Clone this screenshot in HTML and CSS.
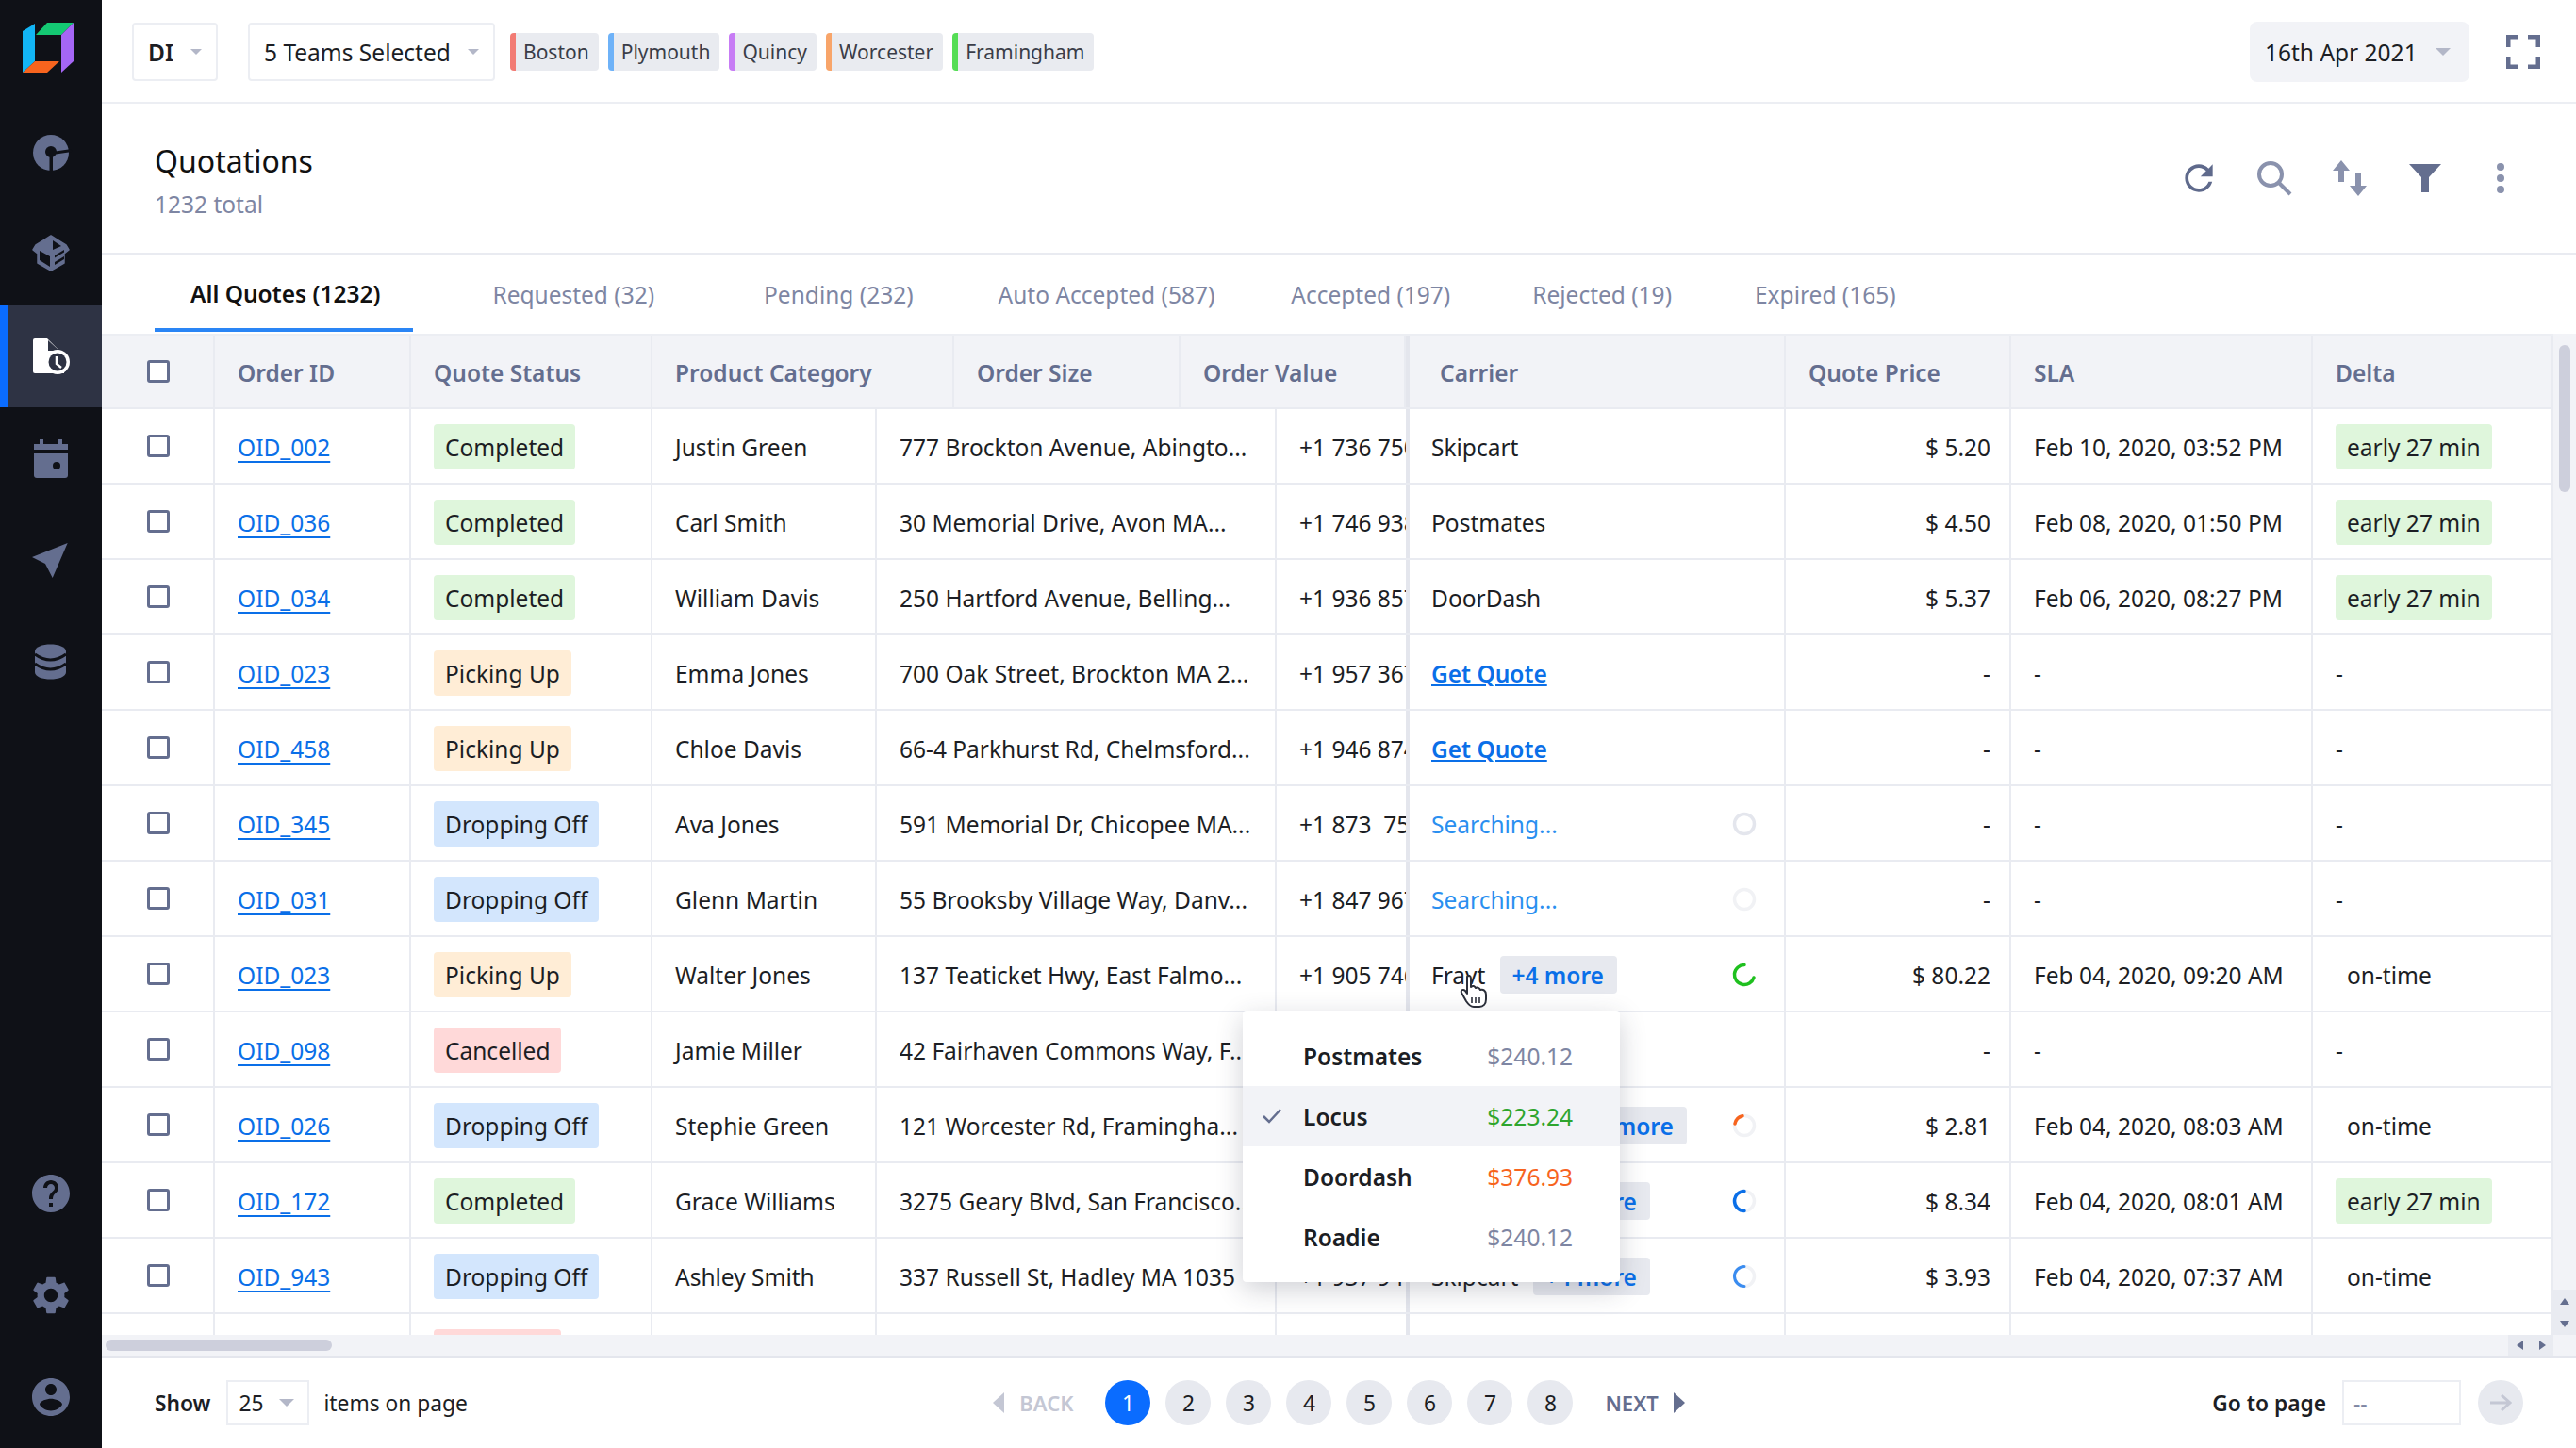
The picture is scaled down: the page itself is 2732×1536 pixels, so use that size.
FILE: index.html
```html
<!DOCTYPE html>
<html lang="en">
<head>
    <meta charset="UTF-8">
    <title>Quotations</title>
    <link rel="stylesheet" href="styles.css">
</head>
<body>

    <!-- Sidebar -->
    <nav class="sidebar">
        <div class="logo">
            <svg width="108" height="108" viewBox="0 0 108 108">
                <polygon points="24,33 37,25 37,65 24,77" fill="#12b5f5"/>
                <polygon points="38,37 50,24 78,24 65,37" fill="#14c973"/>
                <polygon points="65,37 78,24 78,65 65,77" fill="#a566f5"/>
                <polygon points="24,77 37,65 63,65 50,77" fill="#f7641e"/>
            </svg>
        </div>
        <a class="nav-item">
            <svg class="nav-icon-lg" viewBox="-2 0 64 64"><circle cx="30" cy="32" r="19"/><path d="M35 32 52 29.5" stroke="#0f1117" stroke-width="3" fill="none"/><circle cx="30" cy="31" r="6" fill="#0f1117"/><rect x="28.5" y="31" width="3.5" height="21" fill="#0f1117"/></svg>
        </a>
        <a class="nav-item">
            <svg class="nav-icon-lg" viewBox="-2 0 64 64"><polygon points="30,12 46,22 49,27 44,31 44,41 30,49 16,41 16,31 11,27 14,22" stroke="#646e8f" stroke-width="1.5" stroke-linejoin="round"/><g fill="#0f1117"><polygon points="18,28 29,34 29,45 18,38"/><polygon points="32,17 41,23 32,27"/><polygon points="34,33 44,27 44,29.5 34,35.5"/><polygon points="34,40 44,34 44,37 34,43"/></g></svg>
        </a>
        <a class="nav-item active">
            <svg class="nav-icon-lg" viewBox="-2 0 64 64"><path d="M11 15Q11 13 13 13H26L44 31V50H13Q11 50 11 48Z"/><polygon points="27,15 39,26 27,26" fill="#2e3344"/><circle cx="37" cy="38" r="13" fill="#fff"/><circle cx="37" cy="38" r="9.5" fill="#2e3344"/><path d="M36 32V40L41 44" stroke="#fff" stroke-width="2.5" fill="none"/></svg>
        </a>
        <a class="nav-item">
            <svg class="nav-icon-lg" viewBox="-2 0 64 64"><path d="M12 17H18V12H22V17H38V12H42V17H48V23H12Z"/><path d="M12 27H48V50Q48 53 45 53H15Q12 53 12 50Z"/><circle cx="36" cy="40" r="4" fill="#0f1117"/></svg>
        </a>
        <a class="nav-item">
            <svg class="nav-icon-lg" viewBox="-2 0 64 64"><polygon points="47.7,14 10,29 24,36 31.7,51"/></svg>
        </a>
        <a class="nav-item">
            <svg class="nav-icon-lg" viewBox="-2 0 64 64"><path d="M13 21C13 11 46 11 46 21V43C46 53 13 53 13 43Z"/><path d="M13 24Q29.5 36 46 24 M13 34Q29.5 46 46 34" stroke="#0f1117" stroke-width="3" fill="none"/></svg>
        </a>
        <div class="nav-spacer"></div>
        <a class="nav-item">
            <svg class="nav-icon" viewBox="0 0 24 24"><path d="M12 2C6.48 2 2 6.48 2 12s4.48 10 10 10 10-4.48 10-10S17.52 2 12 2zm1 17h-2v-2h2v2zm2.07-7.75l-.9.92C13.45 12.9 13 13.5 13 15h-2v-.5c0-1.1.45-2.1 1.17-2.83l1.24-1.26c.37-.36.59-.86.59-1.41 0-1.1-.9-2-2-2s-2 .9-2 2H8c0-2.21 1.79-4 4-4s4 1.79 4 4c0 .88-.36 1.68-.93 2.25z"/></svg>
        </a>
        <a class="nav-item">
            <svg class="nav-icon" viewBox="0 0 24 24"><path d="M19.14 12.94c.04-.3.06-.61.06-.94 0-.32-.02-.64-.07-.94l2.03-1.58c.18-.14.23-.41.12-.61l-1.92-3.32c-.12-.22-.37-.29-.59-.22l-2.39.96c-.5-.38-1.03-.7-1.62-.94l-.36-2.54c-.04-.24-.24-.41-.48-.41h-3.84c-.24 0-.43.17-.47.41l-.36 2.54c-.59.24-1.13.57-1.62.94l-2.39-.96c-.22-.08-.47 0-.59.22L2.74 8.87c-.12.21-.08.47.12.61l2.03 1.58c-.05.3-.09.63-.09.94s.02.64.07.94l-2.03 1.58c-.18.14-.23.41-.12.61l1.92 3.32c.12.22.37.29.59.22l2.39-.96c.5.38 1.03.7 1.62.94l.36 2.54c.05.24.24.41.48.41h3.84c.24 0 .44-.17.47-.41l.36-2.54c.59-.24 1.13-.56 1.62-.94l2.39.96c.22.08.47 0 .59-.22l1.92-3.32c.12-.22.07-.47-.12-.61l-2.01-1.58zM12 15.6c-1.98 0-3.6-1.62-3.6-3.6s1.62-3.6 3.6-3.6 3.6 1.62 3.6 3.6-1.62 3.6-3.6 3.6z"/></svg>
        </a>
        <a class="nav-item">
            <svg class="nav-icon" viewBox="0 0 24 24"><path d="M12 2C6.48 2 2 6.48 2 12s4.48 10 10 10 10-4.48 10-10S17.52 2 12 2zm0 3c1.66 0 3 1.34 3 3s-1.34 3-3 3-3-1.34-3-3 1.34-3 3-3zm0 14.2c-2.5 0-4.71-1.28-6-3.22.03-1.99 4-3.08 6-3.08 1.99 0 5.97 1.09 6 3.08-1.29 1.94-3.5 3.22-6 3.22z"/></svg>
        </a>
    </nav>

    <!-- Main content -->
    <main class="main">
        <header class="topbar">
            <div class="select select-di">DI <span class="caret"></span></div>
            <div class="select select-teams">5 Teams Selected <span class="caret"></span></div>
            <span class="team team-boston">Boston</span>
            <span class="team team-plymouth">Plymouth</span>
            <span class="team team-quincy">Quincy</span>
            <span class="team team-worcester">Worcester</span>
            <span class="team team-framingham">Framingham</span>
            <div class="date">16th Apr 2021 <span class="caret"></span></div>
            <svg class="fullscreen" width="36" height="36" viewBox="0 0 36 36"><path d="M2 13V2H13 M23 2H34V13 M34 23V34H23 M13 34H2V23" fill="none" stroke="#646e8f" stroke-width="5"/></svg>
        </header>

        <section class="page-head">
            <div>
                <h1>Quotations</h1>
                <p>1232 total</p>
            </div>
            <div class="actions">
                <span class="action"><svg width="44" height="44" viewBox="0 0 24 24" fill="#5f6a8c"><path d="M17.65 6.35C16.2 4.9 14.21 4 12 4c-4.42 0-7.99 3.58-7.99 8s3.57 8 7.99 8c3.73 0 6.84-2.55 7.73-6h-2.08c-.82 2.33-3.04 4-5.65 4-3.31 0-6-2.69-6-6s2.69-6 6-6c1.66 0 3.14.69 4.22 1.78L13 11h7V4l-2.35 2.35z"/></svg></span>
                <span class="action"><svg width="38" height="38" viewBox="0 0 38 38" fill="none" stroke="#8a92ad" stroke-width="4"><circle cx="15" cy="15" r="12"/><path d="M24 24 36 36"/></svg></span>
                <span class="action"><svg width="36" height="38" viewBox="0 0 36 38" fill="#8a92ad"><path d="M9 0 18 11H12V23H6V11H0Z"/><path d="M27 38 36 27H30V14H24V27H18Z"/></svg></span>
                <span class="action"><svg width="34" height="30" viewBox="0 0 34 30" fill="#646e8f"><path d="M0 0H34L21 14V30H13V14Z"/></svg></span>
                <span class="action"><svg width="10" height="34" viewBox="0 0 10 34" fill="#8a92ad"><circle cx="5" cy="5" r="4"/><circle cx="5" cy="17" r="4"/><circle cx="5" cy="29" r="4"/></svg></span>
            </div>
        </section>

        <div class="tabs">
            <a class="tab active">All Quotes (1232)</a>
            <a class="tab">Requested (32)</a>
            <a class="tab">Pending (232)</a>
            <a class="tab">Auto Accepted (587)</a>
            <a class="tab">Accepted (197)</a>
            <a class="tab">Rejected (19)</a>
            <a class="tab">Expired (165)</a>
        </div>

        <section class="table-area">
            <div class="table">
                <div class="thead">
                    <div class="th"><span class="check"></span></div>
                    <div class="th">Order ID</div>
                    <div class="th">Quote Status</div>
                    <div class="th">Product Category</div>
                    <div class="th">Order Size</div>
                    <div class="th">Order Value</div>
                    <div class="th th-frozen">Carrier</div>
                    <div class="th">Quote Price</div>
                    <div class="th">SLA</div>
                    <div class="th">Delta</div>
                </div>

                <div class="row">
                    <div class="td td-check"><span class="check"></span></div>
                    <div class="td"><a class="oid">OID_002</a></div>
                    <div class="td"><span class="badge green">Completed</span></div>
                    <div class="td">Justin Green</div>
                    <div class="td">777 Brockton Avenue, Abingto...</div>
                    <div class="td td-phone">+1 736 750 2231</div>
                    <div class="td td-carrier">Skipcart</div>
                    <div class="td td-price">$ 5.20</div>
                    <div class="td">Feb 10, 2020, 03:52 PM</div>
                    <div class="td"><span class="badge green">early 27 min</span></div>
                </div>
                <div class="row">
                    <div class="td td-check"><span class="check"></span></div>
                    <div class="td"><a class="oid">OID_036</a></div>
                    <div class="td"><span class="badge green">Completed</span></div>
                    <div class="td">Carl Smith</div>
                    <div class="td">30 Memorial Drive, Avon MA...</div>
                    <div class="td td-phone">+1 746 938 1120</div>
                    <div class="td td-carrier">Postmates</div>
                    <div class="td td-price">$ 4.50</div>
                    <div class="td">Feb 08, 2020, 01:50 PM</div>
                    <div class="td"><span class="badge green">early 27 min</span></div>
                </div>
                <div class="row">
                    <div class="td td-check"><span class="check"></span></div>
                    <div class="td"><a class="oid">OID_034</a></div>
                    <div class="td"><span class="badge green">Completed</span></div>
                    <div class="td">William Davis</div>
                    <div class="td">250 Hartford Avenue, Belling...</div>
                    <div class="td td-phone">+1 936 857 4410</div>
                    <div class="td td-carrier">DoorDash</div>
                    <div class="td td-price">$ 5.37</div>
                    <div class="td">Feb 06, 2020, 08:27 PM</div>
                    <div class="td"><span class="badge green">early 27 min</span></div>
                </div>
                <div class="row">
                    <div class="td td-check"><span class="check"></span></div>
                    <div class="td"><a class="oid">OID_023</a></div>
                    <div class="td"><span class="badge orange">Picking Up</span></div>
                    <div class="td">Emma Jones</div>
                    <div class="td">700 Oak Street, Brockton MA 2...</div>
                    <div class="td td-phone">+1 957 367 9021</div>
                    <div class="td td-carrier"><a class="get-quote">Get Quote</a></div>
                    <div class="td td-price">-</div>
                    <div class="td">-</div>
                    <div class="td">-</div>
                </div>
                <div class="row">
                    <div class="td td-check"><span class="check"></span></div>
                    <div class="td"><a class="oid">OID_458</a></div>
                    <div class="td"><span class="badge orange">Picking Up</span></div>
                    <div class="td">Chloe Davis</div>
                    <div class="td">66-4 Parkhurst Rd, Chelmsford...</div>
                    <div class="td td-phone">+1 946 874 3302</div>
                    <div class="td td-carrier"><a class="get-quote">Get Quote</a></div>
                    <div class="td td-price">-</div>
                    <div class="td">-</div>
                    <div class="td">-</div>
                </div>
                <div class="row">
                    <div class="td td-check"><span class="check"></span></div>
                    <div class="td"><a class="oid">OID_345</a></div>
                    <div class="td"><span class="badge blue">Dropping Off</span></div>
                    <div class="td">Ava Jones</div>
                    <div class="td">591 Memorial Dr, Chicopee MA...</div>
                    <div class="td td-phone">+1 873&nbsp; 751 0098</div>
                    <div class="td td-carrier">
                        <span class="searching">Searching...</span>
                        <svg class="spinner" viewBox="0 0 26 26"><circle cx="13" cy="13" r="10.5" class="track"/></svg>
                    </div>
                    <div class="td td-price">-</div>
                    <div class="td">-</div>
                    <div class="td">-</div>
                </div>
                <div class="row">
                    <div class="td td-check"><span class="check"></span></div>
                    <div class="td"><a class="oid">OID_031</a></div>
                    <div class="td"><span class="badge blue">Dropping Off</span></div>
                    <div class="td">Glenn Martin</div>
                    <div class="td">55 Brooksby Village Way, Danv...</div>
                    <div class="td td-phone">+1 847 967 2210</div>
                    <div class="td td-carrier">
                        <span class="searching">Searching...</span>
                        <svg class="spinner" viewBox="0 0 26 26"><circle cx="13" cy="13" r="10.5" class="track faint"/></svg>
                    </div>
                    <div class="td td-price">-</div>
                    <div class="td">-</div>
                    <div class="td">-</div>
                </div>
                <div class="row">
                    <div class="td td-check"><span class="check"></span></div>
                    <div class="td"><a class="oid">OID_023</a></div>
                    <div class="td"><span class="badge orange">Picking Up</span></div>
                    <div class="td">Walter Jones</div>
                    <div class="td">137 Teaticket Hwy, East Falmo...</div>
                    <div class="td td-phone">+1 905 746 8813</div>
                    <div class="td td-carrier">
                        Fravt <span class="more">+4 more</span>
                        <svg class="spinner" viewBox="0 0 26 26"><path d="M13 2.5A10.5 10.5 0 1 0 23 16" fill="none" stroke="#1fc01f" stroke-width="3.5" stroke-linecap="round"/></svg>
                    </div>
                    <div class="td td-price">$ 80.22</div>
                    <div class="td">Feb 04, 2020, 09:20 AM</div>
                    <div class="td"><span class="plain">on-time</span></div>
                </div>
                <div class="row">
                    <div class="td td-check"><span class="check"></span></div>
                    <div class="td"><a class="oid">OID_098</a></div>
                    <div class="td"><span class="badge red">Cancelled</span></div>
                    <div class="td">Jamie Miller</div>
                    <div class="td">42 Fairhaven Commons Way, F...</div>
                    <div class="td td-phone">+1 947 550 7731</div>
                    <div class="td td-carrier"></div>
                    <div class="td td-price">-</div>
                    <div class="td">-</div>
                    <div class="td">-</div>
                </div>
                <div class="row">
                    <div class="td td-check"><span class="check"></span></div>
                    <div class="td"><a class="oid">OID_026</a></div>
                    <div class="td"><span class="badge blue">Dropping Off</span></div>
                    <div class="td">Stephie Green</div>
                    <div class="td">121 Worcester Rd, Framingha...</div>
                    <div class="td td-phone">+1 937 944 6120</div>
                    <div class="td td-carrier">
                        Postmates <span class="more more-wide">+4 more</span>
                        <svg class="spinner" viewBox="0 0 26 26"><circle cx="13" cy="13" r="10.5" class="track faint"/><path d="M3 11A10.5 10.5 0 0 1 11 2.7" fill="none" stroke="#f7641e" stroke-width="3.5" stroke-linecap="round"/></svg>
                    </div>
                    <div class="td td-price">$ 2.81</div>
                    <div class="td">Feb 04, 2020, 08:03 AM</div>
                    <div class="td"><span class="plain">on-time</span></div>
                </div>
                <div class="row">
                    <div class="td td-check"><span class="check"></span></div>
                    <div class="td"><a class="oid">OID_172</a></div>
                    <div class="td"><span class="badge green">Completed</span></div>
                    <div class="td">Grace Williams</div>
                    <div class="td">3275 Geary Blvd, San Francisco...</div>
                    <div class="td td-phone">+1 937 940 3348</div>
                    <div class="td td-carrier">
                        Skipcart <span class="more">+4 more</span>
                        <svg class="spinner" viewBox="0 0 26 26"><circle cx="13" cy="13" r="10.5" class="track faint"/><path d="M13 2.5A10.5 10.5 0 0 0 13 23.5" fill="none" stroke="#0a6fe8" stroke-width="3.5" stroke-linecap="round"/></svg>
                    </div>
                    <div class="td td-price">$ 8.34</div>
                    <div class="td">Feb 04, 2020, 08:01 AM</div>
                    <div class="td"><span class="badge green">early 27 min</span></div>
                </div>
                <div class="row">
                    <div class="td td-check"><span class="check"></span></div>
                    <div class="td"><a class="oid">OID_943</a></div>
                    <div class="td"><span class="badge blue">Dropping Off</span></div>
                    <div class="td">Ashley Smith</div>
                    <div class="td">337 Russell St, Hadley MA 1035</div>
                    <div class="td td-phone">+1 937 941 5562</div>
                    <div class="td td-carrier">
                        Skipcart <span class="more">+4 more</span>
                        <svg class="spinner" viewBox="0 0 26 26"><circle cx="13" cy="13" r="10.5" class="track faint"/><path d="M13 2.5A10.5 10.5 0 0 0 13 23.5" fill="none" stroke="#3a8cf0" stroke-width="3" stroke-linecap="round"/></svg>
                    </div>
                    <div class="td td-price">$ 3.93</div>
                    <div class="td">Feb 04, 2020, 07:37 AM</div>
                    <div class="td"><span class="plain">on-time</span></div>
                </div>
                <div class="row">
                    <div class="td td-check"></div>
                    <div class="td"></div>
                    <div class="td"><span class="badge red">Cancelled</span></div>
                    <div class="td"></div>
                    <div class="td"></div>
                    <div class="td td-phone"></div>
                    <div class="td td-carrier"></div>
                    <div class="td td-price"></div>
                    <div class="td"></div>
                    <div class="td"></div>
                </div>
            </div>

            <div class="vscroll">
                <div class="vthumb"></div>
                <div class="vbtns">
                    <span class="arr arr-up"></span>
                    <span class="arr arr-down"></span>
                </div>
            </div>
            <div class="hscroll">
                <div class="hthumb"></div>
                <div class="hbtns">
                    <span class="arr arr-left"></span>
                    <span class="arr arr-right"></span>
                </div>
            </div>
            <div class="corner"></div>

            <!-- Carrier dropdown -->
            <div class="popup">
                <div class="popup-row"><b>Postmates</b><span>$240.12</span></div>
                <div class="popup-row selected">
                    <svg class="tick" width="20" height="16" viewBox="0 0 20 16"><path d="M1 8 7 14 19 1" fill="none" stroke="#646e8f" stroke-width="2.5"/></svg>
                    <b>Locus</b><span class="price-green">$223.24</span>
                </div>
                <div class="popup-row"><b>Doordash</b><span class="price-orange">$376.93</span></div>
                <div class="popup-row"><b>Roadie</b><span>$240.12</span></div>
            </div>
            <svg class="pointer" width="30" height="36" viewBox="0 0 30 36"><path d="M8 2C10 0 12 1 12 4V13C14 11 16 12 17 14 19 13 21 14 22 16 25 15 28 17 28 21V26C28 31 25 34 21 34H15C11 34 9 31 7 28L2 19C1 16 4 15 6 17L8 20Z" fill="#fff" stroke="#2b2f3a" stroke-width="2" stroke-linejoin="round"/><path d="M13 24V30 M17 24V30 M21 24V30" stroke="#2b2f3a" stroke-width="1.6"/></svg>
        </section>

        <footer class="footer">
            <div class="show">
                <b>Show</b>
                <div class="per-page">25 <span class="caret"></span></div>
                <span>items on page</span>
            </div>
            <div class="pager">
                <span class="pager-link off"><i class="tri tri-left"></i>BACK</span>
                <div class="pages">
                    <span class="page on">1</span>
                    <span class="page">2</span>
                    <span class="page">3</span>
                    <span class="page">4</span>
                    <span class="page">5</span>
                    <span class="page">6</span>
                    <span class="page">7</span>
                    <span class="page">8</span>
                </div>
                <span class="pager-link">NEXT<i class="tri tri-right"></i></span>
            </div>
            <div class="goto">
                <b>Go to page</b>
                <div class="goto-input">--</div>
                <span class="goto-btn"><svg width="24" height="20" viewBox="0 0 24 20" fill="none" stroke="#c4c7d4" stroke-width="3"><path d="M1 10H22 M13 2 22 10 13 18"/></svg></span>
            </div>
        </footer>
    </main>

</body>
</html>
```

FILE: styles.css
```css
/* Base */
* { margin: 0; padding: 0; box-sizing: border-box; }
body { display: flex; height: 1536px; overflow: hidden; background: #fff; color: #1c1e24; font-family: "Noto Sans", sans-serif; font-size: 24.5px; }
b { font-weight: 600; }

/* Sidebar */
.sidebar { width: 108px; flex: none; display: flex; flex-direction: column; background: #0f1117; }
.logo { height: 108px; flex: none; }
.logo svg { display: block; }
.nav-item { height: 108px; flex: none; display: flex; align-items: center; justify-content: center; }
.nav-item.active { background: #2e3344; border-left: 8px solid #0a6cff; padding-right: 8px; }
.nav-icon { width: 48px; height: 48px; fill: #646e8f; }
.nav-icon-lg { width: 64px; height: 64px; fill: #646e8f; }
.nav-item.active .nav-icon-lg { fill: #fff; }
.nav-spacer { flex: 1; }

/* Main */
.main { flex: 1; min-width: 0; display: flex; flex-direction: column; }

/* Top bar */
.topbar { height: 110px; flex: none; display: flex; align-items: center; padding: 2px 38px 0 32px; border-bottom: 2px solid #eceef3; }
.select { height: 62px; display: flex; align-items: center; justify-content: space-between; padding: 0 15px; border: 2px solid #eceef3; border-radius: 4px; }
.select-di { width: 91px; margin-right: 32px; font-weight: 600; }
.select-teams { width: 262px; margin-right: 16px; }
.caret { display: inline-block; width: 0; height: 0; border-left: 8px solid transparent; border-right: 8px solid transparent; border-top: 8px solid #b3b7c8; }
.select .caret { border-left-width: 6px; border-right-width: 6px; border-top-width: 6px; }
.team { height: 40px; display: flex; align-items: center; margin-right: 10px; padding: 0 10px 0 8px; background: #e9ebf0; border-left: 6px solid; border-radius: 4px; color: #3a3d48; font-size: 21px; }
.team-boston { border-color: #f27b74; }
.team-plymouth { border-color: #6eb2f8; }
.team-quincy { border-color: #c77cf5; }
.team-worcester { border-color: #f8a56a; }
.team-framingham { border-color: #55dd55; }
.date { width: 233px; height: 64px; margin-left: auto; display: flex; align-items: center; justify-content: space-between; padding: 0 20px 0 16px; background: #f2f3f7; border-radius: 8px; }
.fullscreen { margin-left: 39px; }

/* Title */
.page-head { height: 160px; flex: none; display: flex; align-items: center; justify-content: space-between; padding: 0 40px 0 56px; border-bottom: 2px solid #e9ebf1; }
.page-head h1 { margin-top: 4px; font-size: 32px; font-weight: 400; line-height: 44px; color: #111; }
.page-head p { margin-top: 8px; line-height: 32px; color: #7e86a3; }
.actions { display: flex; align-items: center; }
.action { width: 80px; display: flex; justify-content: center; }

/* Tabs */
.tabs { height: 84px; flex: none; display: flex; padding-left: 56px; }
.tab { display: flex; align-items: center; padding: 0 40px; color: #7e86a3; }
.tab.active { margin-bottom: 2px; padding: 4px 35px 0 38px; border-bottom: 4px solid #2a85f5; color: #111; font-weight: 600; }
.tab:nth-child(2) { margin-left: 44px; }
.tab:nth-child(3) { margin-left: 36px; }
.tab:nth-child(4) { margin-left: 10px; }
.tab:nth-child(5) { margin-left: 1px; }
.tab:nth-child(6) { margin-left: 7px; }
.tab:nth-child(7) { margin-left: 8px; }

/* Table */
.table-area { position: relative; flex: none; height: 1086px; display: grid; grid-template-columns: 2600px 24px; grid-template-rows: 1062px 24px; }
.table { overflow: hidden; }
.thead, .row { display: grid; height: 80px; border-bottom: 2px solid #e9ebf1; }
.thead { grid-template-columns: 120px 208px 256px 320px 240px 239px 403px 239px 320px 255px; background: #f2f3f7; border-top: 2px solid #eceef3; }
.row { grid-template-columns: 120px 208px 256px 238px 424px 137px 403px 239px 320px 255px; }
.th, .td { display: flex; align-items: center; padding: 2px 24px 0; border-right: 2px solid #e9ebf1; white-space: nowrap; overflow: hidden; }
.th { color: #646e8f; font-weight: 600; }
.th:first-child, .td-check { justify-content: center; padding: 0 0 0 2px; }
.th-frozen, .td-carrier { border-left: 4px solid #e4e6ed; padding-left: 23px; padding-right: 29px; }
.th-frozen { padding-left: 32px; }
.td-phone { padding-right: 0; border-right: none; }
.td-price { justify-content: flex-end; padding-right: 20px; }
.check { width: 24px; height: 24px; border: 3px solid #646e8f; border-radius: 3px; background: #fff; }
.oid { color: #0a6fe8; text-decoration: underline; text-underline-offset: 5px; }
.badge { height: 48px; display: flex; align-items: center; padding: 0 12px; border-radius: 4px; }
.plain { padding-left: 12px; }
.green { background: #dff6dc; }
.orange { background: #ffedd6; }
.blue { background: #d3e6fd; }
.red { background: #ffd9d9; }
.get-quote { color: #0a6fe8; font-weight: 600; text-decoration: underline; }
.searching { color: #2a8ff0; }
.more { margin-left: 16px; height: 40px; display: flex; align-items: center; padding: 0 14px 0 12px; background: #e7e9ef; border-radius: 4px; color: #0a6fe8; font-weight: 600; }
.more-wide { margin-left: 26px; }
.spinner { width: 26px; height: 26px; flex: none; margin-left: auto; }
.track { fill: none; stroke: #e4e6ed; stroke-width: 3.5; }
.track.faint { stroke: #f1f2f5; }

/* Scrollbars */
.vscroll { display: flex; flex-direction: column; justify-content: space-between; background: #f2f3f7; padding-top: 12px; }
.vthumb { width: 12px; height: 156px; margin-left: 6px; background: #cdcfdc; border-radius: 6px; }
.vbtns { height: 48px; display: flex; flex-direction: column; align-items: center; justify-content: space-around; background: #e9ebf1; }
.hscroll { display: flex; align-items: center; justify-content: space-between; background: #f2f3f7; border-bottom: 2px solid #e4e6ed; padding-left: 4px; }
.hthumb { width: 240px; height: 12px; background: #cdcfdc; border-radius: 6px; }
.hbtns { width: 48px; height: 100%; display: flex; align-items: center; justify-content: space-around; background: #e9ebf1; }
.corner { background: #f2f3f7; border-bottom: 2px solid #e4e6ed; }
.arr { width: 0; height: 0; border: 5px solid transparent; }
.arr-up { border-bottom: 7px solid #646e8f; border-top: 0; }
.arr-down { border-top: 7px solid #646e8f; border-bottom: 0; }
.arr-left { border-right: 7px solid #646e8f; border-left: 0; }
.arr-right { border-left: 7px solid #646e8f; border-right: 0; }

/* Popup */
.popup { position: absolute; left: 1210px; top: 718px; width: 400px; padding: 16px 0; background: #fff; box-shadow: 0 8px 28px rgba(40, 46, 70, 0.22); border-radius: 4px; }
.popup-row { position: relative; height: 64px; display: flex; align-items: center; justify-content: space-between; padding: 0 50px 0 64px; }
.popup-row.selected { background: #f2f3f7; }
.popup-row span { color: #7e86a3; }
.popup-row .price-green { color: #2ea52e; }
.popup-row .price-orange { color: #f7641e; }
.tick { position: absolute; left: 21px; top: 24px; }
.pointer { position: absolute; left: 1440px; top: 680px; }

/* Footer */
.footer { flex: none; height: 96px; display: grid; grid-template-columns: 1fr auto 1fr; align-items: center; padding: 0 56px; font-size: 22.75px; }
.show { display: flex; align-items: center; }
.per-page { width: 88px; height: 48px; margin: 0 16px 0 16px; display: flex; align-items: center; justify-content: space-between; padding: 0 14px 0 12px; border: 2px solid #eceef3; }
.pager { display: flex; align-items: center; }
.pager-link { display: flex; align-items: center; font-weight: 600; font-size: 22px; color: #646e8f; }
.pager-link.off { color: #c4c7d4; }
.tri { display: inline-block; width: 0; height: 0; border-top: 11px solid transparent; border-bottom: 11px solid transparent; }
.tri-left { border-right: 12px solid #c4c7d4; margin-right: 16px; }
.tri-right { border-left: 12px solid #646e8f; margin-left: 16px; }
.pages { display: flex; gap: 16px; margin: 0 34px; }
.page { width: 48px; height: 48px; display: flex; align-items: center; justify-content: center; background: #e7e9ef; border-radius: 50%; }
.page.on { background: #0a6cff; color: #fff; }
.goto { display: flex; align-items: center; justify-content: flex-end; }
.goto-input { width: 126px; height: 48px; margin: 0 18px 0 17px; display: flex; align-items: center; padding-left: 10px; border: 2px solid #eceef3; color: #7e86a3; }
.goto-btn { width: 48px; height: 48px; display: flex; align-items: center; justify-content: center; background: #e7e9ef; border-radius: 50%; }
```
